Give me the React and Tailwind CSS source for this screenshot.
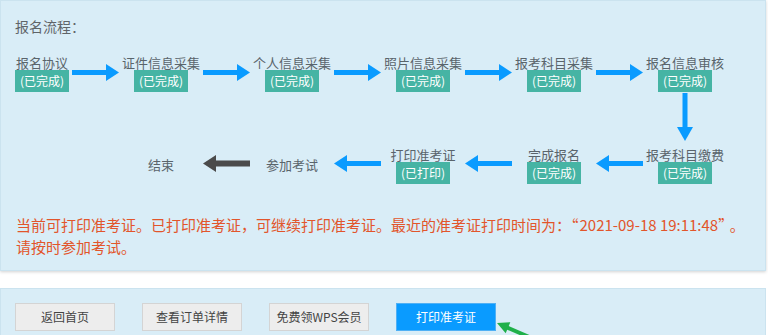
const BLUE = '#0a9bff';

function ArrowRight() {
  return (
    <svg width="47" height="17" viewBox="0 0 47 17" className="block">
      <rect x="0" y="6" width="36" height="5" fill={BLUE} />
      <polygon points="34,0 47,8.5 34,17" fill={BLUE} />
    </svg>
  );
}

function ArrowLeft({ color = BLUE, thick = 5 }) {
  const y = 8.5 - thick / 2;
  return (
    <svg width="47" height="17" viewBox="0 0 47 17" className="block">
      <rect x="11" y={y} width="36" height={thick} fill={color} />
      <polygon points="13,0 0,8.5 13,17" fill={color} />
    </svg>
  );
}

function ArrowDown() {
  return (
    <svg width="16" height="48" viewBox="0 0 16 48" className="block">
      <rect x="5.5" y="0" width="5" height="36" fill={BLUE} />
      <polygon points="0,34 16,34 8,48" fill={BLUE} />
    </svg>
  );
}

function Node({ label, status = '(已完成)' }) {
  return (
    <div className="flex flex-col items-center">
      <div className="text-[13px] leading-[15px] whitespace-nowrap text-[#5a646b]">{label}</div>
      <div className="w-[54px] h-[22px] bg-[#46b4a4] text-white text-[12px] leading-[22px] text-center whitespace-nowrap">
        {status}
      </div>
    </div>
  );
}

function Cell({ children, className = '' }) {
  return <div className={`flex justify-center ${className}`}>{children}</div>;
}

function Btn({ children, primary }) {
  return (
    <button
      className={
        primary
          ? 'w-[100px] h-[28px] bg-[#0a9bff] border border-[#4fb0f5] text-white text-[12px]'
          : 'w-[100px] h-[28px] bg-[#ededed] border border-[#d4d4d4] text-[#444] text-[12px]'
      }
    >
      {children}
    </button>
  );
}

export default function App() {
  const grid =
    'grid grid-cols-[54px_53px_78px_53px_78px_53px_78px_53px_78px_53px_78px]';
  return (
    <div
      className="w-full min-h-[335px] bg-white overflow-hidden"
      style={{ fontFamily: '"Noto Sans CJK SC", "Noto Sans", sans-serif' }}
    >
      <div className="mr-[2px] bg-[#d9edf7] border border-[#cbe3ef] shadow-[0_1px_3px_rgba(0,0,0,0.18)] pt-[15px] pl-[14px] pb-[12px]">
        <div className="text-[14px] leading-[20px] text-[#5f6468]">报名流程：</div>

        <div className={`${grid} items-center mt-[19px]`}>
          <Node label="报名协议" />
          <Cell className="mb-[2px]"><ArrowRight /></Cell>
          <Node label="证件信息采集" />
          <Cell className="mb-[2px]"><ArrowRight /></Cell>
          <Node label="个人信息采集" />
          <Cell className="mb-[2px]"><ArrowRight /></Cell>
          <Node label="照片信息采集" />
          <Cell className="mb-[2px]"><ArrowRight /></Cell>
          <Node label="报考科目采集" />
          <Cell className="mb-[2px]"><ArrowRight /></Cell>
          <Node label="报名信息审核" />
        </div>

        <div className={`${grid} h-[55px]`}>
          <div className="col-start-11 flex justify-center pt-[1px]">
            <ArrowDown />
          </div>
        </div>

        <div className={`${grid} items-center`}>
          <Cell className="col-start-3 mb-[3px]">
            <span className="text-[13px] leading-[15px] text-[#5a646b]">结束</span>
          </Cell>
          <Cell className="mb-[4px]"><ArrowLeft color="#4b4b4b" thick={6} /></Cell>
          <Cell className="mb-[3px]">
            <span className="text-[13px] leading-[15px] text-[#5a646b]">参加考试</span>
          </Cell>
          <Cell className="mb-[4px]"><ArrowLeft /></Cell>
          <Node label="打印准考证" status="(已打印)" />
          <Cell className="mb-[4px]"><ArrowLeft /></Cell>
          <Node label="完成报名" />
          <Cell className="mb-[4px]"><ArrowLeft /></Cell>
          <Node label="报考科目缴费" />
        </div>

        <div className="mt-[30px] pl-[1px] text-[15px] leading-[22px] text-[#e2552b] whitespace-nowrap">
          当前可打印准考证。已打印准考证，可继续打印准考证。最近的准考证打印时间为：“<span className="ml-[1px]">2021-09-18 19:11:48</span>”<span className="ml-[4px]">。</span>
          <br />
          请按时参加考试。
        </div>
      </div>

      <div className="relative mt-[17px] mr-[2px] bg-[#d9edf7] border border-[#cbe3ef] pt-[14px] pl-[14px] pb-[20px]">
        <div className="flex gap-[27px]">
          <Btn>返回首页</Btn>
          <Btn>查看订单详情</Btn>
          <Btn>免费领WPS会员</Btn>
          <Btn primary>打印准考证</Btn>
        </div>
        <svg
          width="50"
          height="25"
          viewBox="0 0 50 25"
          className="absolute left-[490px] top-[27px]"
        >
          <line x1="16" y1="11.5" x2="44" y2="23.5" stroke="#1fb04a" strokeWidth="4" />
          <polygon points="6,7 14.7,17.2 19.3,6.2" fill="#1fb04a" />
        </svg>
      </div>
    </div>
  );
}
